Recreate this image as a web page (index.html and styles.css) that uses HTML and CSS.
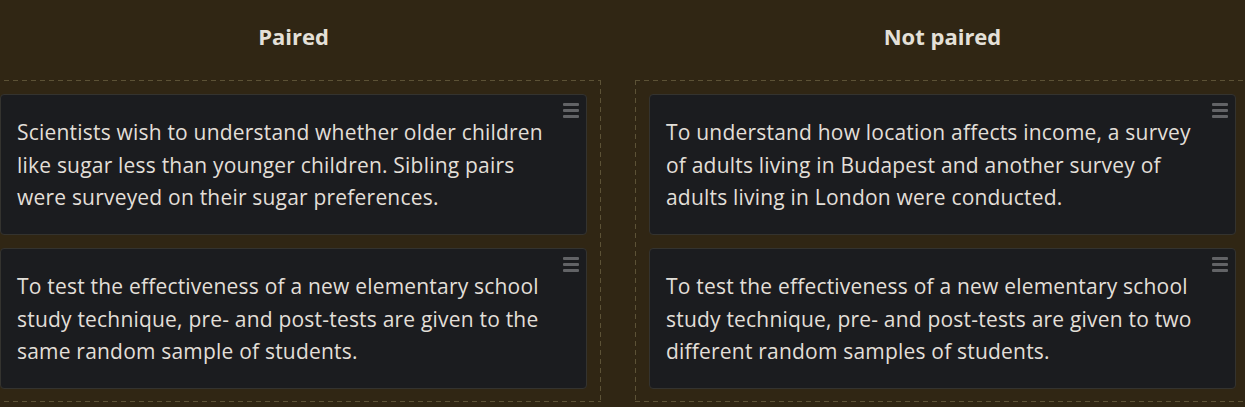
FILE: index.html
```html
<!DOCTYPE html>
<html>
<head>
<meta charset="utf-8">
<link rel="stylesheet" href="styles.css">
</head>
<body>
<div class="board">
  <section class="column">
    <h2 class="title">Paired</h2>
    <div class="zone">
      <div class="card"><span class="handle"><i></i><i></i><i></i></span><p>Scientists wish to understand whether older children like sugar less than younger children. Sibling pairs were surveyed on their sugar preferences.</p></div>
      <div class="card"><span class="handle"><i></i><i></i><i></i></span><p>To test the effectiveness of a new elementary school study technique, pre- and post-tests are given to the same random sample of students.</p></div>
    </div>
  </section>
  <section class="column">
    <h2 class="title">Not paired</h2>
    <div class="zone">
      <div class="card"><span class="handle"><i></i><i></i><i></i></span><p>To understand how location affects income, a survey of adults living in Budapest and another survey of adults living in London were conducted.</p></div>
      <div class="card"><span class="handle"><i></i><i></i><i></i></span><p>To test the effectiveness of a new elementary school study technique, pre- and post-tests are given to two different random samples of students.</p></div>
    </div>
  </section>
</div>
</body>
</html>
```

FILE: styles.css
```css
html, body {
  margin: 0;
  padding: 0;
  background: #302614;
  overflow: hidden;
}
body {
  font-family: "Open Sans", "Liberation Sans", sans-serif;
  color: #e2dfd8;
}
.board {
  display: grid;
  grid-template-columns: 615px 615px;
  column-gap: 34px;
  margin-left: -14px;
  width: 1264px;
}
.column {
  display: flex;
  flex-direction: column;
}
.title {
  margin: 0;
  height: 80px;
  display: flex;
  align-items: center;
  justify-content: center;
  padding-bottom: 8px;
  box-sizing: border-box;
  font-size: 22px;
  font-weight: 700;
  color: #e4e0d8;
}
.zone {
  --dash: #5c5236;
  background:
    repeating-linear-gradient(90deg, var(--dash) 0 5px, transparent 5px 9px) top left / 100% 1px no-repeat,
    repeating-linear-gradient(90deg, var(--dash) 0 5px, transparent 5px 9px) bottom left / 100% 1px no-repeat,
    repeating-linear-gradient(180deg, var(--dash) 0 5px, transparent 5px 9px) top left / 1px 100% no-repeat,
    repeating-linear-gradient(180deg, var(--dash) 0 5px, transparent 5px 9px) top right / 1px 100% no-repeat;
  padding: 14px;
  display: flex;
  flex-direction: column;
  gap: 13px;
  height: 322px;
  box-sizing: border-box;
}
.card {
  position: relative;
  background: #1b1c1f;
  border: 1px solid #34332f;
  border-radius: 4px;
  padding: 21px 30px 21px 16px;
  height: 141px;
  box-sizing: border-box;
}
.card p {
  margin: 0;
  font-size: 21px;
  line-height: 32.5px;
  letter-spacing: 0.2px;
  max-width: 540px;
}
.handle {
  position: absolute;
  top: 8px;
  right: 7px;
  width: 16px;
  display: flex;
  flex-direction: column;
  gap: 3px;
}
.handle i {
  display: block;
  height: 3px;
  background: #626366;
  border-radius: 1px;
}
```
